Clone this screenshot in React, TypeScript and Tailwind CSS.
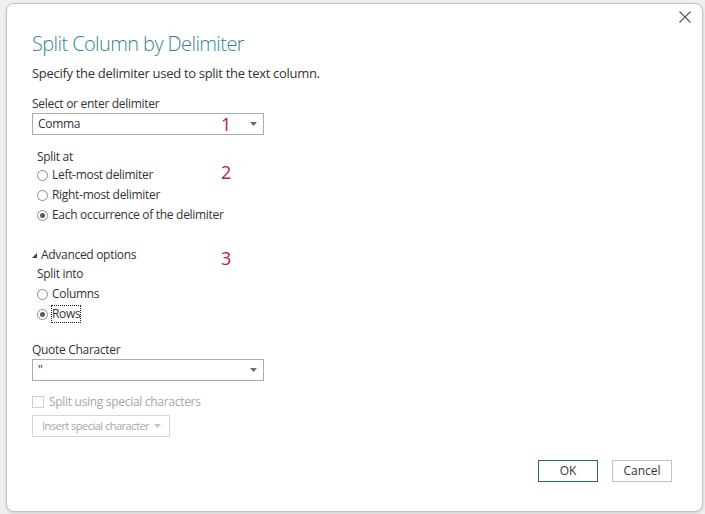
import React from "react";

const font = { fontFamily: '"Open Sans", "Noto Sans", "Liberation Sans", sans-serif' };

function Radio({ checked, label, focus }: { checked?: boolean; label: string; focus?: boolean }) {
  return (
    <div className="flex items-center h-[20px]">
      <span className="w-[11px] h-[11px] rounded-full border border-[#8c8c8c] bg-white flex items-center justify-center shrink-0">
        {checked && <span className="w-[5px] h-[5px] rounded-full bg-[#5a5a5a]" />}
      </span>
      <span
        className={
          "ml-[4px] text-[12px] leading-[16px] tracking-[-0.3px] text-[#333333] " +
          (focus ? "outline outline-1 outline-dotted outline-[#222222]" : "")
        }
      >
        {label}
      </span>
    </div>
  );
}

function Caret({ color = "#6b6b6b" }: { color?: string }) {
  return (
    <svg width="7" height="4" viewBox="0 0 7 4" className="shrink-0">
      <path d="M0 0 L7 0 L3.5 4 Z" fill={color} />
    </svg>
  );
}

function Dropdown({ value }: { value: string }) {
  return (
    <div className="w-[232px] h-[22px] border border-[#ababab] bg-white flex items-center pl-[5px] pr-[6px]">
      <span className="flex-1 text-[12px] leading-[16px] tracking-[-0.3px] text-[#333333]">{value}</span>
      <Caret />
    </div>
  );
}

export default function App() {
  return (
    <div className="w-[705px] h-[514px] bg-[#efefef] pt-[3px] pl-[6px] overflow-hidden" style={font}>
      <div className="relative w-[697px] h-[509px] bg-white rounded-[8px] border border-[#c4c4c4] shadow-[0_1px_3px_rgba(0,0,0,0.15)] pl-[25px] pr-[30px] pt-[26px] flex flex-col">
        <button className="absolute right-[10px] top-[6px] w-[14px] h-[14px] flex items-center justify-center">
          <svg width="12" height="12" viewBox="0 0 12 12">
            <path d="M0.5 0.5 L11.5 11.5 M11.5 0.5 L0.5 11.5" stroke="#555555" strokeWidth="1.1" />
          </svg>
        </button>

        <div className="text-[20px] leading-[28px] font-light tracking-[-0.6px] text-[#2f8a8d]">Split Column by Delimiter</div>
        <div className="mt-[5px] text-[13px] leading-[20px] tracking-[-0.3px] text-[#333333]">
          Specify the delimiter used to split the text column.
        </div>

        <div className="mt-[13px] text-[12px] leading-[16px] tracking-[-0.3px] text-[#333333]">Select or enter delimiter</div>
        <div className="relative mt-[1px]">
          <Dropdown value="Comma" />
          <span className="absolute left-[189px] top-[-2px] text-[18px] leading-[26px] text-[#c0163f]">1</span>
        </div>

        <div className="relative mt-[14px] pl-[5px]">
          <span className="absolute left-[189px] top-[10px] text-[18px] leading-[26px] text-[#c0163f]">2</span>
          <div className="text-[12px] leading-[16px] tracking-[-0.3px] text-[#333333]">Split at</div>
          <div>
            <Radio label="Left-most delimiter" />
            <Radio label="Right-most delimiter" />
            <Radio checked label="Each occurrence of the delimiter" />
          </div>
        </div>

        <div className="relative mt-[22px]">
          <span className="absolute left-[189px] top-[-2px] text-[18px] leading-[26px] text-[#c0163f]">3</span>
          <div className="flex items-center h-[16px]">
            <svg width="5" height="5" viewBox="0 0 5 5" className="mr-[4px]">
              <path d="M5 0 L5 5 L0 5 Z" fill="#444444" />
            </svg>
            <span className="text-[12px] leading-[16px] tracking-[-0.3px] text-[#333333]">Advanced options</span>
          </div>
          <div className="pl-[5px] mt-[3px]">
            <div className="text-[12px] leading-[16px] tracking-[-0.3px] text-[#333333]">Split into</div>
            <div className="mt-[2px]">
              <Radio label="Columns" />
              <Radio checked focus label="Rows" />
            </div>
          </div>
        </div>

        <div className="mt-[18px] text-[12px] leading-[16px] tracking-[-0.3px] text-[#333333]">Quote Character</div>
        <div className="mt-[1px]">
          <Dropdown value={'"'} />
        </div>

        <div className="mt-[13px] flex items-center h-[16px]">
          <span className="w-[12px] h-[12px] border border-[#d0d0d0] bg-white shrink-0" />
          <span className="ml-[5px] text-[12px] leading-[16px] tracking-[-0.3px] text-[#a6a6a6] whitespace-nowrap">Split using special characters</span>
        </div>
        <div className="mt-[5px] w-[138px] h-[22px] border border-[#d6d6d6] flex items-center pl-[9px] pr-[8px]">
          <span className="flex-1 whitespace-nowrap text-[11px] leading-[16px] tracking-[-0.5px] text-[#a6a6a6]">Insert special character</span>
          <Caret color="#c4c4c4" />
        </div>

        <div className="mt-auto mb-[29px] flex justify-end gap-[14px]">
          <button className="w-[60px] h-[22px] border border-[#217346] text-[12px] text-[#333333]">OK</button>
          <button className="w-[60px] h-[22px] border border-[#c2c2c2] text-[12px] text-[#333333]">Cancel</button>
        </div>
      </div>
    </div>
  );
}
